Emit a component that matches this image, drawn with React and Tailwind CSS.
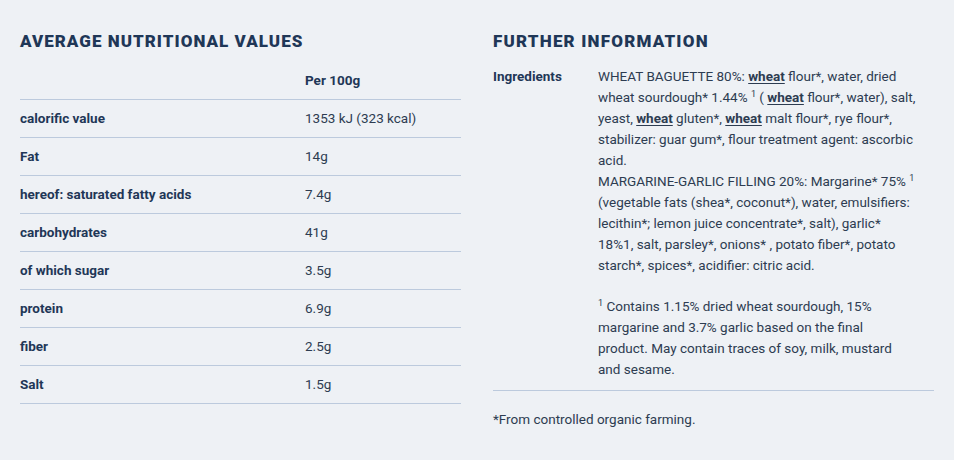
const rows = [
  { label: "calorific value", value: "1353 kJ (323 kcal)" },
  { label: "Fat", value: "14g" },
  { label: "hereof: saturated fatty acids", value: "7.4g" },
  { label: "carbohydrates", value: "41g" },
  { label: "of which sugar", value: "3.5g" },
  { label: "protein", value: "6.9g" },
  { label: "fiber", value: "2.5g" },
  { label: "Salt", value: "1.5g" },
];

const Wheat = () => <span className="font-bold underline underline-offset-2">wheat</span>;
const Sup = () => <span className="relative -top-[5px] text-[9px] leading-none">1</span>;

export default function App() {
  return (
    <div className="min-h-[460px] w-[954px] bg-[#eef1f5] px-5 pt-[29px] text-[#2d3c51] font-['Roboto',sans-serif]">
      <div className="flex gap-[32px]">
        {/* Nutrition table */}
        <div className="w-[443px]">
          <h2 className="font-['Roboto',sans-serif] text-[17px] font-black leading-6 tracking-[0.06em] text-[#1f3757]">
            AVERAGE NUTRITIONAL VALUES
          </h2>
          <div className="mt-[9px]">
            <div className="flex h-[38px] items-center border-b border-[#bccadd] text-[13.5px]">
              <div className="w-[285px]" />
              <div className="font-bold text-[#1f3757]">Per 100g</div>
            </div>
            {rows.map((r) => (
              <div
                key={r.label}
                className="flex h-[38px] items-center border-b border-[#bccadd] text-[13.5px]"
              >
                <div className="w-[285px] font-bold text-[#1f3757]">{r.label}</div>
                <div>{r.value}</div>
              </div>
            ))}
          </div>
        </div>

        {/* Further information */}
        <div className="w-[441px]">
          <h2 className="font-['Roboto',sans-serif] text-[17px] font-black leading-6 tracking-[0.07em] text-[#1f3757]">
            FURTHER INFORMATION
          </h2>
          <div className="mt-[13px] flex border-b border-[#bccadd] pb-[10px] text-[13.5px] leading-[21px]">
            <div className="w-[105px] shrink-0 font-bold text-[#1f3757]">Ingredients</div>
            <div className="w-[336px]">
              <p>
                WHEAT BAGUETTE 80%: <Wheat /> flour*, water, dried
                <br />
                wheat sourdough* 1.44% <Sup /> ( <Wheat /> flour*, water), salt,
                <br />
                yeast, <Wheat /> gluten*, <Wheat /> malt flour*, rye flour*,
                <br />
                stabilizer: guar gum*, flour treatment agent: ascorbic
                <br />
                acid.
                <br />
                MARGARINE-GARLIC FILLING 20%: Margarine* 75% <Sup />
                <br />
                (vegetable fats (shea*, coconut*), water, emulsifiers:
                <br />
                lecithin*; lemon juice concentrate*, salt), garlic*
                <br />
                18%1, salt, parsley*, onions* , potato fiber*, potato
                <br />
                starch*, spices*, acidifier: citric acid.
              </p>
              <p className="mt-[20px]">
                <Sup /> Contains 1.15% dried wheat sourdough, 15%
                <br />
                margarine and 3.7% garlic based on the final
                <br />
                product. May contain traces of soy, milk, mustard
                <br />
                and sesame.
              </p>
            </div>
          </div>
          <p className="mt-[18px] text-[13.5px] leading-[21px]">*From controlled organic farming.</p>
        </div>
      </div>
    </div>
  );
}
